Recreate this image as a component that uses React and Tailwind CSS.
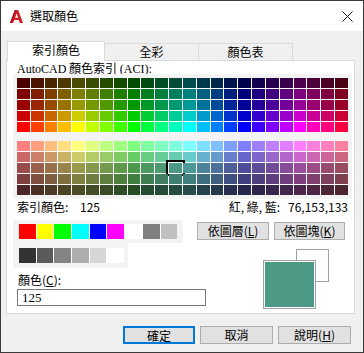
import React from 'react';

// ACI colour table: 24 hues x 10 shades
const MAX = [255, 255, 204, 204, 153, 153, 127, 127, 76, 76];
const MIN = [0, 127, 0, 102, 0, 76, 0, 63, 0, 38];

const aci = (g, v) => {
  const hi = MAX[v];
  const lo = MIN[v];
  const h = g * 15;
  const s = Math.floor(h / 60);
  const f = (h % 60) / 60;
  const up = Math.floor(lo + (hi - lo) * f);
  const down = Math.floor(hi - (hi - lo) * f);
  const rgb = [
    [hi, up, lo],
    [down, hi, lo],
    [lo, hi, up],
    [lo, down, hi],
    [up, lo, hi],
    [hi, lo, down],
  ][s];
  return `rgb(${rgb.join(',')})`;
};

const TOP_ROWS = [8, 6, 4, 2, 0];
const BOTTOM_ROWS = [1, 3, 5, 7, 9];
const HUES = Array.from({ length: 24 }, (_, i) => i);

const STD_1 = ['#ff0000', '#ffff00', '#00ff00', '#00ffff', '#0000ff', '#ff00ff', '#ffffff', '#808080', '#c0c0c0'];
const STD_2 = ['#333333', '#5b5b5b', '#848484', '#adadad', '#d6d6d6', '#ffffff'];

const sans = "font-['Noto_Sans_CJK_TC','Liberation_Sans',sans-serif]";
const serif = "font-['Liberation_Serif','Noto_Sans_CJK_TC',serif]";

const ColorBlock = ({ rows, selected }) => (
  <div className="grid grid-cols-[repeat(24,minmax(0,1fr))] grid-rows-[repeat(5,10px)] gap-px bg-white">
    {rows.map((v) =>
      HUES.map((g) => (
        <div key={`${v}-${g}`} className="relative" style={{ backgroundColor: aci(g, v) }}>
          {selected && selected.v === v && selected.g === g && (
            <div className="absolute -top-[3px] -bottom-[3px] -left-[3px] -right-[3px] border-2 border-black" />
          )}
        </div>
      ))
    )}
  </div>
);

const Btn = ({ className = '', children }) => (
  <button className={`h-[18px] border border-[#adadad] bg-[#e1e1e1] text-[12px] leading-[16px] text-black ${className}`}>
    {children}
  </button>
);

export default function App() {
  return (
    <div className={`w-[364px] h-[353px] border border-[#3a3a3a] bg-[#f0f0f0] flex flex-col text-black ${sans}`}>
      {/* title bar */}
      <div className="h-[30px] bg-white flex items-center pl-[8px] pr-[10px]">
        <svg width="15" height="15" viewBox="0 0 16 16">
          <path d="M1 15 L6.3 1 H9.8 L15 15 H11.6 L10.5 11.8 H5.6 L4.5 15 Z M6.6 9.2 H9.6 L8.1 4.8 Z" fill="#d0202a" fillRule="evenodd" />
          <path d="M1 15 L6.3 1 H7.6 L2.6 15 Z" fill="#9a1219" />
        </svg>
        <span className="ml-[6px] text-[12px] leading-[14px]">選取顏色</span>
        <svg className="ml-auto" width="11" height="11" viewBox="0 0 11 11">
          <path d="M0.5 0.5 L10.5 10.5 M10.5 0.5 L0.5 10.5" stroke="#111" strokeWidth="1" />
        </svg>
      </div>

      {/* tabs */}
      <div className="mt-[10px] ml-[6px] flex items-end">
        <div className="relative z-10 -mb-px w-[98px] h-[20px] bg-white border-t border-l border-r border-[#d9d9d9] text-[12px] leading-[14px] text-center pt-px">
          索引顏色
        </div>
        <div className="w-[94px] h-[17px] border-t border-r border-[#d9d9d9] text-[12px] leading-[14px] text-center pt-[1px]">
          全彩
        </div>
        <div className="w-[94px] h-[17px] border-t border-r border-[#d9d9d9] text-[12px] leading-[14px] text-center pt-[1px]">
          顏色表
        </div>
      </div>

      {/* panel */}
      <div className="ml-[5px] w-[349px] h-[254px] border border-[#d9d9d9] bg-white flex flex-col">
        <div className="pl-[10px] h-[13px] text-[12px] leading-[13px] whitespace-nowrap">
          <span className={serif}>AutoCAD</span> 顏色索引 <span className={serif}>(ACI):</span>
        </div>
        <div className="ml-[6px] w-[339px] bg-[#f3f3f3] p-[4px] flex flex-col gap-[9px]">
          <ColorBlock rows={TOP_ROWS} />
          <ColorBlock rows={BOTTOM_ROWS} selected={{ v: 5, g: 11 }} />
        </div>
        <div className="h-[16px] flex items-center pl-[10px] pr-[6px] text-[12px] leading-[16px]">
          <span className="w-[63px]">索引顏色:</span>
          <span>125</span>
          <span className="ml-auto">紅, 綠, 藍:</span>
          <span className="ml-[8px]">76,153,133</span>
        </div>

        <div className="mt-[5px] pl-[6px] flex">
          <div className="w-[184px] flex flex-col">
            <div className="w-[170px] h-[23px] bg-[#f3f3f3] pl-[6px] pt-[4px]">
              <div className="flex gap-px bg-white w-fit">
                {STD_1.map((c, i) => (
                  <div key={i} className="w-[16.7px] h-[15px]" style={{ backgroundColor: c }} />
                ))}
              </div>
            </div>
            <div className="w-[115px] h-[25px] bg-[#f3f3f3] pl-[6px] pt-[5px]">
              <div className="flex gap-px bg-white w-fit">
                {STD_2.map((c, i) => (
                  <div key={i} className="w-[16.7px] h-[15px]" style={{ backgroundColor: c }} />
                ))}
              </div>
            </div>
            <div className="mt-[4px] h-[16px] pl-[5px] text-[12px] leading-[16px]">
              顏色(<span className="underline">C</span>):
            </div>
            <div className={`mt-px ml-[4px] w-[189px] h-[17px] border border-[#7a7a7a] bg-white pl-[4px] text-[13px] leading-[15px] ${serif}`}>
              125
            </div>
          </div>

          <div className="flex flex-col">
            <div className="mt-[2px] flex gap-[5px]">
              <Btn className="w-[72px]">依圖層(<span className="underline">L</span>)</Btn>
              <Btn className="w-[71px]">依圖塊(<span className="underline">K</span>)</Btn>
            </div>
            <div className="relative mt-[9px] ml-[66px] w-[66px] h-[60px]">
              <div className="absolute left-[33px] top-0 w-[33px] h-[33px] border border-[#a0a0a0] bg-white" />
              <div className="absolute left-0 top-[11px] w-[53px] h-[49px] border border-[#a0a0a0] bg-white p-px">
                <div className="w-full h-full bg-[#4c9985]" />
              </div>
            </div>
          </div>
        </div>
      </div>

      {/* dialog buttons */}
      <div className="mt-[12px] pr-[12px] flex justify-end gap-[5px]">
        <Btn className="w-[72px] !border-2 !border-[#0078d7] leading-[14px]">確定</Btn>
        <Btn className="w-[73px]">取消</Btn>
        <Btn className="w-[73px]">說明(<span className="underline">H</span>)</Btn>
      </div>
    </div>
  );
}
